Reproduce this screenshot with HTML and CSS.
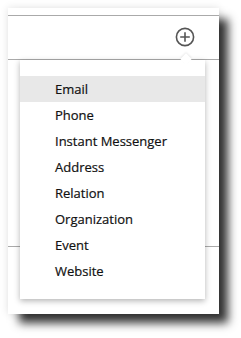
FILE: index.html
```html
<!DOCTYPE html>
<html>
<head>
  <title>add field</title>
  <meta charset="utf-8">
  <link rel="stylesheet" href="styles.css">
</head>
<body>
  <div class="window">
    <div class="row head">
      <span class="add-btn">
        <svg width="20" height="20" viewBox="0 0 20 20">
          <circle cx="10" cy="10" r="8.6" fill="none" stroke="#555" stroke-width="1.6"/>
          <path d="M10 5.2v9.6M5.2 10h9.6" stroke="#555" stroke-width="1.6"/>
        </svg>
      </span>
    </div>
    <div class="row body"></div>
    <div class="menu">
      <span class="caret"></span>
      <ul>
        <li class="active">Email</li>
        <li>Phone</li>
        <li>Instant Messenger</li>
        <li>Address</li>
        <li>Relation</li>
        <li>Organization</li>
        <li>Event</li>
        <li>Website</li>
      </ul>
    </div>
  </div>
</body>
</html>
```

FILE: styles.css
```css
html, body {
  height: 100%;
}
body {
  margin: 0;
  padding: 8px;
  box-sizing: border-box;
  background-color: #fff;
  font-family: "Open Sans", "Noto Sans", sans-serif;
}
.window {
  position: relative;
  width: 211px;
  height: 299px;
  padding-top: 7px;
  background-color: #fff;
  box-shadow: 10px 10px 9px -1px rgba(0,0,0,.8), 0 0 8px rgba(0,0,0,.12);
}
.row {
  border-top: 1px solid #aaa;
}
.head {
  height: 43px;
  display: flex;
  align-items: center;
  justify-content: flex-end;
  padding-right: 24px;
}
.add-btn {
  display: flex;
  margin-top: -1px;
}
.body {
  height: 186px;
  border-bottom: 1px solid #aaa;
}
.menu {
  position: absolute;
  left: 12px;
  top: 52px;
  width: 185px;
  background-color: #fff;
  box-shadow: 0 2px 6px rgba(0,0,0,.3);
}
.caret {
  position: absolute;
  top: -5px;
  left: 162px;
  width: 8px;
  height: 8px;
  background-color: #fff;
  transform: rotate(45deg);
  box-shadow: -1px -1px 2px rgba(0,0,0,.08);
}
.menu ul {
  position: relative;
  list-style: none;
  margin: 0;
  padding: 16px 0 15px;
}
.menu li {
  height: 26px;
  line-height: 26px;
  padding-left: 35px;
  font-size: 13px;
  color: #111;
  -webkit-text-stroke: 0.2px #111;
}
.menu li.active {
  background-color: #e8e8e8;
}
```
